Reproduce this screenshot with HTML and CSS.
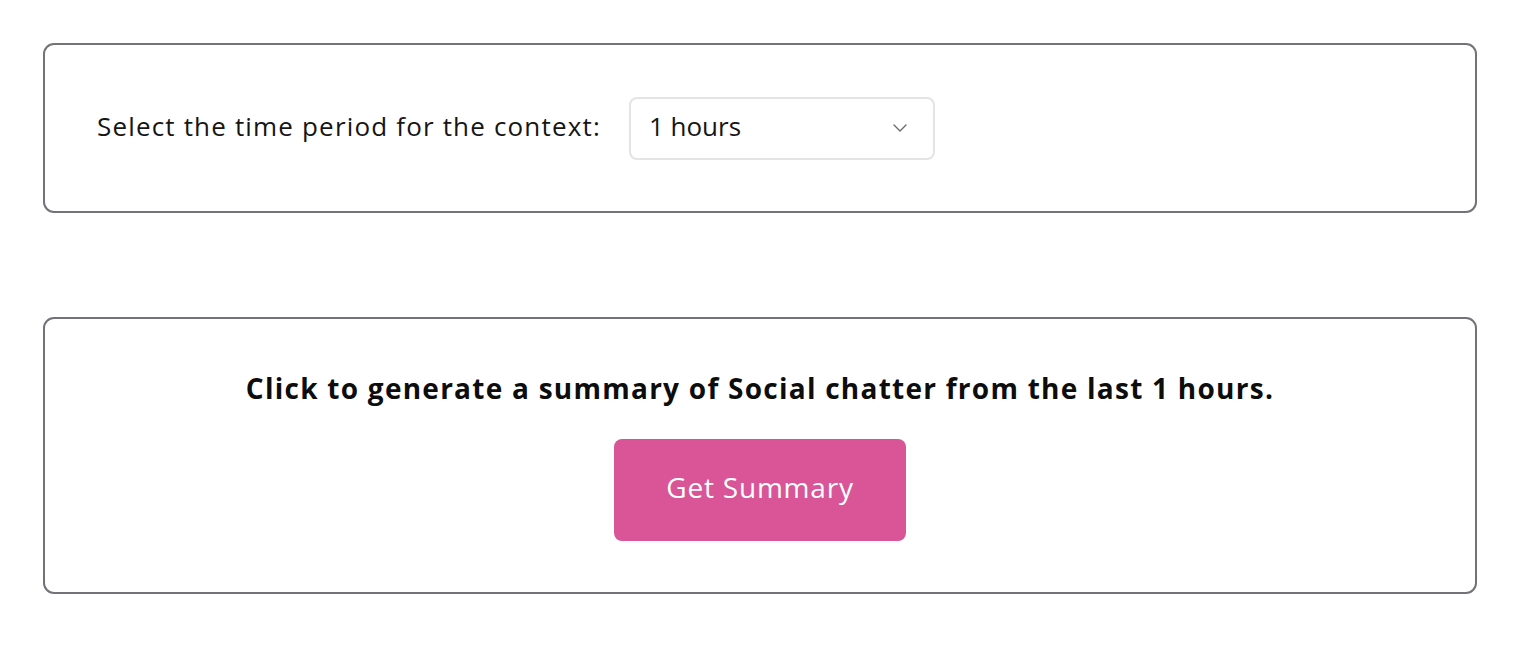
FILE: index.html
```html
<!DOCTYPE html>
<html>
<head>
<meta charset="utf-8">
<link rel="stylesheet" href="styles.css">
</head>
<body>
<div class="page">
  <section class="card card-period">
    <label class="period-label" for="period">Select the time period for the context:</label>
    <div class="select">
      <span class="select-value">1 hours</span>
      <svg class="chevron" width="14" height="8" viewBox="0 0 14 8"><path d="M1 1l6 6 6-6" fill="none" stroke="#6b6b6b" stroke-width="1.4" stroke-linecap="round" stroke-linejoin="round"/></svg>
    </div>
  </section>
  <section class="card card-summary">
    <h2 class="summary-title">Click to generate a summary of Social chatter from the last 1 hours.</h2>
    <button class="btn-summary">Get Summary</button>
  </section>
</div>
</body>
</html>
```

FILE: styles.css
```css
html, body {
  margin: 0;
  padding: 0;
  background: #ffffff;
}
body {
  font-family: "Open Sans", "Lato", sans-serif;
  color: #111111;
}
.page {
  padding: 43px 51px 0 43px;
  display: flex;
  flex-direction: column;
  gap: 104px;
}
.card {
  border: 2px solid #737277;
  border-radius: 11px;
  box-sizing: border-box;
}
.card-period {
  height: 170px;
  display: flex;
  align-items: center;
  padding-left: 52px;
  gap: 28px;
}
.period-label {
  font-size: 26px;
  line-height: 30px;
  letter-spacing: 1.17px;
  color: #151515;
  padding-bottom: 4px;
}
.select {
  width: 306px;
  height: 63px;
  box-sizing: border-box;
  border: 2px solid #e4e4e7;
  border-radius: 8px;
  display: flex;
  align-items: center;
  justify-content: space-between;
  padding: 0 26px 0 18px;
}
.select-value {
  font-size: 26px;
  line-height: 30px;
  color: #151515;
  padding-bottom: 4px;
}
.chevron {
  display: block;
}
.card-summary {
  height: 277px;
  display: flex;
  flex-direction: column;
  align-items: center;
  padding-top: 52px;
  gap: 34px;
}
.summary-title {
  margin: 0;
  font-size: 28px;
  line-height: 34px;
  font-weight: 700;
  letter-spacing: 1.25px;
  color: #0d0d0d;
}
.btn-summary {
  width: 292px;
  height: 102px;
  border: none;
  border-radius: 8px;
  background: #d95597;
  color: #ffffff;
  font-family: "Open Sans", "Lato", sans-serif;
  font-size: 28px;
  letter-spacing: 0.8px;
  padding: 0 0 6px;
  cursor: pointer;
}
```
